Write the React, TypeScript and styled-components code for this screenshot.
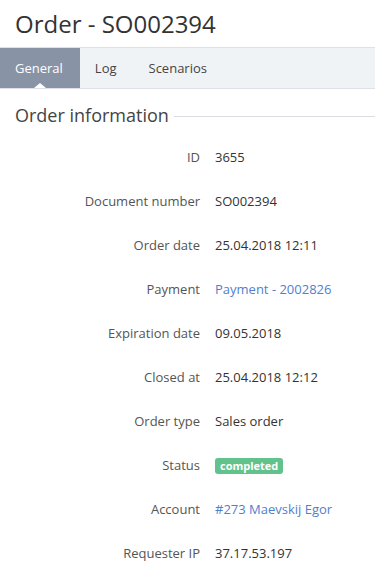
import { FC } from 'react';
import styled, { createGlobalStyle } from 'styled-components';

const GlobalStyle = createGlobalStyle`
    body {
        margin: 0;
        background: #ffffff;
        font-family: "Open Sans", "Liberation Sans", sans-serif;
        color: #333;
    }
`;

const Page = styled.div`
    width: 375px;
`;

const Title = styled.h1`
    margin: 0;
    padding: 7px 15px 0 15px;
    height: 40px;
    font-size: 24px;
    font-weight: 400;
    line-height: 34px;
    color: #333;
`;

const Tabs = styled.div`
    display: flex;
    height: 40px;
    background: #f0f3f6;
    border-top: 1px solid #dde1e6;
    border-bottom: 1px solid #dde1e6;
`;

const Tab = styled.div<{ $active?: boolean }>`
    position: relative;
    display: flex;
    align-items: center;
    padding: 0 17px 0 15px;
    font-size: 13px;
    color: ${(p) => (p.$active ? '#fff' : '#444')};
    background: ${(p) => (p.$active ? '#8893a5' : 'transparent')};

    ${(p) =>
        p.$active &&
        `
        &:after {
            content: '';
            position: absolute;
            left: 50%;
            bottom: 0;
            margin-left: -6px;
            border-left: 6px solid transparent;
            border-right: 6px solid transparent;
            border-bottom: 5px solid #fff;
        }
    `}
`;

const Section = styled.div`
    padding: 13px 0 0 15px;
`;

const SectionHeading = styled.div`
    display: flex;
    align-items: center;
    gap: 5px;
    font-size: 18px;
    line-height: 26px;
    color: #444;

    &:after {
        content: '';
        flex: 1;
        height: 1px;
        background: #dcdde3;
        margin-top: 2px;
    }
`;

const Fields = styled.div`
    margin-top: 7px;
`;

const Row = styled.div`
    display: grid;
    grid-template-columns: 185px 1fr;
    column-gap: 15px;
    align-items: center;
    height: 44px;
    font-size: 13px;
`;

const Label = styled.div`
    text-align: right;
    color: #555;
`;

const Value = styled.div`
    color: #333;
`;

const Link = styled.a`
    color: #4f7fce;
    text-decoration: none;
`;

const Badge = styled.span`
    display: inline-block;
    padding: 0 5px;
    line-height: 16px;
    border-radius: 3px;
    background: #62c28c;
    color: #fff;
    font-size: 11px;
    font-weight: 700;
`;

const rows: { label: string; value: string; kind?: 'link' | 'badge' }[] = [
    { label: 'ID', value: '3655' },
    { label: 'Document number', value: 'SO002394' },
    { label: 'Order date', value: '25.04.2018 12:11' },
    { label: 'Payment', value: 'Payment - 2002826', kind: 'link' },
    { label: 'Expiration date', value: '09.05.2018' },
    { label: 'Closed at', value: '25.04.2018 12:12' },
    { label: 'Order type', value: 'Sales order' },
    { label: 'Status', value: 'completed', kind: 'badge' },
    { label: 'Account', value: '#273 Maevskij Egor', kind: 'link' },
    { label: 'Requester IP', value: '37.17.53.197' },
];

const App: FC = () => {
    return (
        <Page>
            <GlobalStyle />
            <Title>Order - SO002394</Title>
            <Tabs>
                <Tab $active>General</Tab>
                <Tab>Log</Tab>
                <Tab>Scenarios</Tab>
            </Tabs>
            <Section>
                <SectionHeading>Order information</SectionHeading>
                <Fields>
                    {rows.map((r) => (
                        <Row key={r.label}>
                            <Label>{r.label}</Label>
                            <Value>
                                {r.kind === 'link' ? (
                                    <Link href="#">{r.value}</Link>
                                ) : r.kind === 'badge' ? (
                                    <Badge>{r.value}</Badge>
                                ) : (
                                    r.value
                                )}
                            </Value>
                        </Row>
                    ))}
                </Fields>
            </Section>
        </Page>
    );
};

export default App;
